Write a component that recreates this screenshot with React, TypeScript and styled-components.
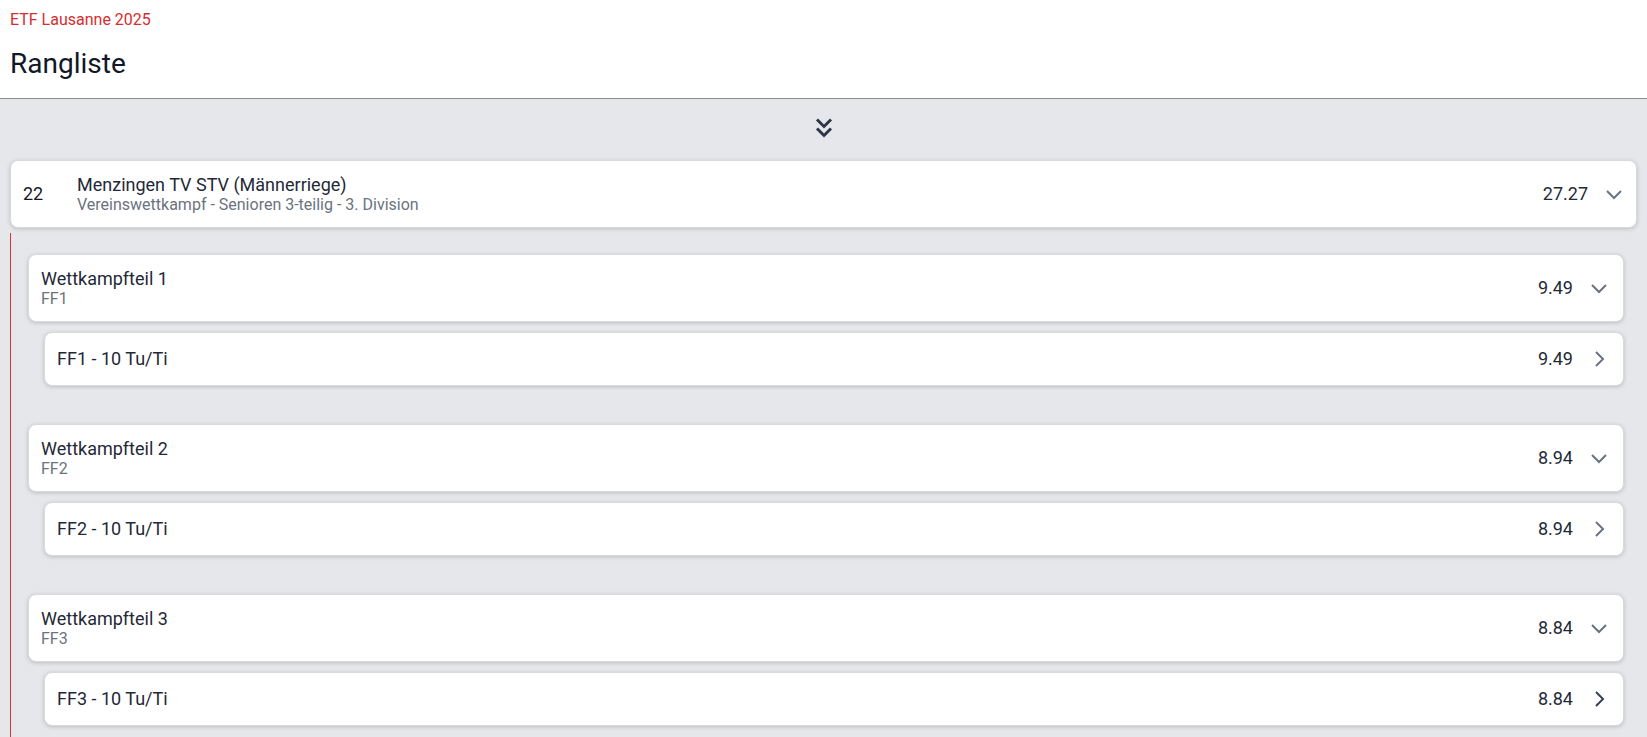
import React from 'react';
import styled, { createGlobalStyle } from 'styled-components';

const GlobalStyle = createGlobalStyle`
	html, body {
		margin: 0;
		padding: 0;
		background: #e5e7eb;
		font-family: Roboto, 'Liberation Sans', sans-serif;
		color: #111827;
	}
	* {
		box-sizing: border-box;
	}
`;

const Header = styled.header`
	background: #ffffff;
	padding: 10px 10px 17px;
	border-bottom: 1px solid #8c8c8c;
`;

const EventName = styled.div`
	font-size: 16px;
	line-height: 20px;
	color: #d32f2f;
`;

const Title = styled.h1`
	margin: 17px 0 0;
	font-size: 28px;
	line-height: 34px;
	font-weight: 400;
	color: #111827;
`;

const Content = styled.main`
	padding: 0 10px 10px;
`;

const ExpandBar = styled.div`
	display: flex;
	justify-content: center;
	padding: 10px 0 15px;
`;

const IconButton = styled.button`
	border: none;
	background: transparent;
	padding: 0;
	width: 36px;
	height: 36px;
	display: flex;
	align-items: center;
	justify-content: center;
	color: #2d3748;
	cursor: pointer;
`;

const Card = styled.div<{ $compact?: boolean; $top?: boolean }>`
	display: flex;
	align-items: center;
	gap: 14px;
	background: #ffffff;
	border: 1px solid #d8d9dd;
	border-radius: 8px;
	box-shadow: 0 1px 4px rgba(0, 0, 0, 0.18);
	padding: ${p => (p.$compact ? '14px' : '13px')} ${p => (p.$top ? '10px' : '12px')} ${p => (p.$compact ? '14px' : '13px')} 12px;
`;

const Rank = styled.div`
	width: 40px;
	font-size: 18px;
	line-height: 24px;
	color: #111827;
`;

const TextBlock = styled.div`
	flex: 1;
	min-width: 0;
`;

const CardTitle = styled.div`
	font-size: 18px;
	line-height: 22px;
	color: #1f2937;
`;

const SingleTitle = styled.div`
	flex: 1;
	font-size: 18px;
	line-height: 24px;
	color: #1f2937;
`;

const CardSub = styled.div`
	font-size: 16px;
	line-height: 18px;
	color: #6b7280;
`;

const Score = styled.div`
	font-size: 18px;
	line-height: 24px;
	color: #1f2937;
`;

const Chevron = styled.span<{ $dark?: boolean }>`
	width: 24px;
	height: 24px;
	display: flex;
	align-items: center;
	justify-content: center;
	color: ${p => (p.$dark ? '#374151' : '#6b7280')};
`;

const Groups = styled.section`
	margin-top: 5px;
	border-left: 1px solid #e0313b;
	padding: 21px 13px 0 17px;
	min-height: 520px;
`;

const Group = styled.div`
	display: flex;
	flex-direction: column;
	gap: 10px;
	margin-bottom: 38px;
`;

const Nested = styled.div`
	margin-left: 16px;
`;

const ChevronsDown = () => (
	<svg width="36" height="36" viewBox="0 0 36 36" fill="none" stroke="currentColor" strokeWidth="3">
		<path d="M11 10.5 L18 17.5 L25 10.5" />
		<path d="M11 19.5 L18 26.5 L25 19.5" />
	</svg>
);

const ChevronDown = () => (
	<svg width="24" height="24" viewBox="0 0 24 24" fill="none" stroke="currentColor" strokeWidth="2">
		<path d="M5 9 L12 16 L19 9" />
	</svg>
);

const ChevronRight = () => (
	<svg width="24" height="24" viewBox="0 0 24 24" fill="none" stroke="currentColor" strokeWidth="2">
		<path d="M9 5 L16 12 L9 19" />
	</svg>
);

const parts = [
	{ name: 'Wettkampfteil 1', code: 'FF1', score: '9.49' },
	{ name: 'Wettkampfteil 2', code: 'FF2', score: '8.94' },
	{ name: 'Wettkampfteil 3', code: 'FF3', score: '8.84' },
];

export default function App() {
	return (
		<>
			<GlobalStyle />
			<Header>
				<EventName>ETF Lausanne 2025</EventName>
				<Title>Rangliste</Title>
			</Header>
			<Content>
				<ExpandBar>
					<IconButton aria-label="Alle aufklappen">
						<ChevronsDown />
					</IconButton>
				</ExpandBar>
				<Card $top>
					<Rank>22</Rank>
					<TextBlock>
						<CardTitle>Menzingen TV STV (Männerriege)</CardTitle>
						<CardSub>Vereinswettkampf - Senioren 3-teilig - 3. Division</CardSub>
					</TextBlock>
					<Score>27.27</Score>
					<Chevron>
						<ChevronDown />
					</Chevron>
				</Card>
				<Groups>
					{parts.map((p, i) => (
						<Group key={p.code}>
							<Card>
								<TextBlock>
									<CardTitle>{p.name}</CardTitle>
									<CardSub>{p.code}</CardSub>
								</TextBlock>
								<Score>{p.score}</Score>
								<Chevron>
									<ChevronDown />
								</Chevron>
							</Card>
							<Nested>
								<Card $compact>
									<SingleTitle>{p.code} - 10 Tu/Ti</SingleTitle>
									<Score>{p.score}</Score>
									<Chevron $dark={i === 2}>
										<ChevronRight />
									</Chevron>
								</Card>
							</Nested>
						</Group>
					))}
				</Groups>
			</Content>
		</>
	);
}
